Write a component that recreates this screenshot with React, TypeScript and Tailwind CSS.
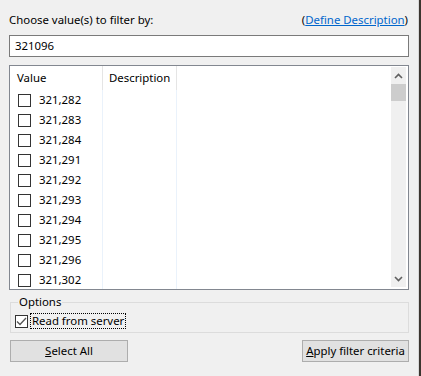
import React from "react";

const values = [
  "321,282",
  "321,283",
  "321,284",
  "321,291",
  "321,292",
  "321,293",
  "321,294",
  "321,295",
  "321,296",
  "321,302",
  "321,303",
];

function Chevron({ down = false }: { down?: boolean }) {
  return (
    <svg width="9" height="6" viewBox="0 0 9 6" className={down ? "rotate-180" : ""}>
      <path d="M1 5 L4.5 1.5 L8 5" fill="none" stroke="#606060" strokeWidth="1.6" />
    </svg>
  );
}

export default function App() {
  return (
    <div
      className="flex h-[376px] w-[421px] bg-[#f0f0f0] text-[11.4px] leading-4 text-black"
      style={{ fontFamily: '"Segoe UI", "Noto Sans", sans-serif' }}
    >
      <div className="flex w-[418px] flex-col pl-[9px] pr-[9px]">
        {/* header line */}
        <div className="mt-[12px] flex items-center justify-between pr-[1px]">
          <span>Choose value(s) to filter by:</span>
          <span>
            (<span className="text-[#0066cc] underline">Define Description</span>)
          </span>
        </div>

        {/* search box */}
        <div className="mt-[7px] flex h-[22px] items-center border border-[#7a7a7a] bg-white pl-[5px]">
          321096
        </div>

        {/* list */}
        <div className="mt-[8px] flex h-[225px] overflow-hidden border border-[#828790] bg-white">
          <div className="flex flex-1 flex-col">
            <div className="flex h-[24px] shrink-0">
              <div className="flex w-[92px] items-center pl-[7px]">Value</div>
              <div className="w-px bg-[#e5e5e5]" />
              <div className="flex w-[73px] items-center pl-[6px]">Description</div>
              <div className="w-px bg-[#e5e5e5]" />
            </div>
            <div className="flex flex-1">
              <div className="w-[92px] shrink-0">
                {values.map((v) => (
                  <div key={v} className="flex h-[20px] items-center pl-[8px]">
                    <span className="h-[13px] w-[13px] border border-[#333333] bg-white" />
                    <span className="ml-[8px]">{v}</span>
                  </div>
                ))}
              </div>
              <div className="w-px bg-[#eaf2fb]" />
              <div className="w-[73px]" />
              <div className="w-px bg-[#eaf2fb]" />
            </div>
          </div>
          {/* scrollbar */}
          <div className="mb-[2px] mr-[2px] mt-[1px] flex w-[15px] flex-col bg-[#f0f0f0]">
            <div className="flex h-[17px] items-center justify-center">
              <Chevron />
            </div>
            <div className="h-[17px] bg-[#cdcdcd]" />
            <div className="flex-1" />
            <div className="flex h-[17px] items-center justify-center">
              <Chevron down />
            </div>
          </div>
        </div>

        {/* options group */}
        <fieldset className="mt-[4px] ml-[1px] h-[39px] border border-[#dcdcdc] pl-[4px] pt-[3px]">
          <legend className="ml-[3px] px-px leading-4">Options</legend>
          <div className="flex items-center">
            <span className="flex h-[13px] w-[13px] items-center justify-center border border-[#333333] bg-white">
              <svg width="11" height="9" viewBox="0 0 11 9">
                <path d="M1 4.5 L4 7.5 L10 1" fill="none" stroke="#555555" strokeWidth="1.3" />
              </svg>
            </span>
            <span className="ml-[2px] border border-dotted border-black px-px leading-[14px]">
              Read from server
            </span>
          </div>
        </fieldset>

        {/* buttons */}
        <div className="mt-[7px] flex justify-between pl-[1px]">
          <button className="h-[22px] w-[118px] border border-[#adadad] bg-[#e1e1e1]">
            <span className="underline">S</span>elect All
          </button>
          <button className="h-[22px] w-[107px] border border-[#adadad] bg-[#e1e1e1]">
            <span className="underline">A</span>pply filter criteria
          </button>
        </div>
      </div>
      <div className="w-px bg-[#d8d8d8]" />
      <div className="flex-1 bg-[#3b352f]" />
    </div>
  );
}
